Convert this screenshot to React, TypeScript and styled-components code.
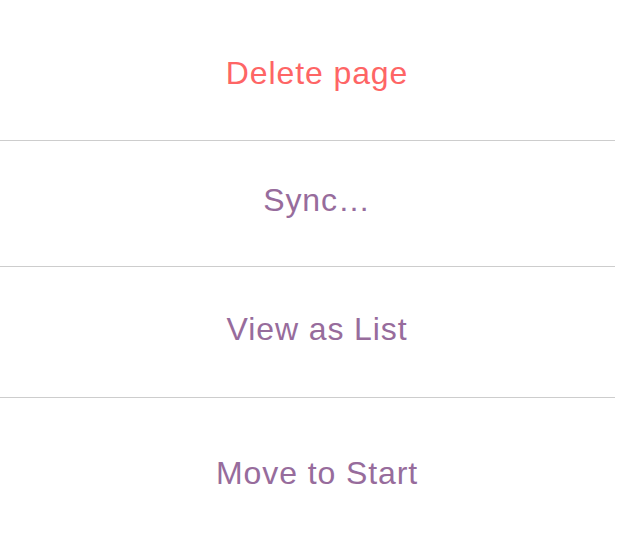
import React from "react";
import styled, { createGlobalStyle } from "styled-components";

const GlobalStyle = createGlobalStyle`
  html, body {
    margin: 0;
    padding: 0;
    background: #ffffff;
  }
  body {
    font-family: "Liberation Sans", Arial, sans-serif;
    -webkit-font-smoothing: antialiased;
  }
`;

const Sheet = styled.div`
  width: 615px;
  height: 537px;
  display: flex;
  flex-direction: column;
  background: #ffffff;
  overflow: hidden;
`;

const Action = styled.div<{ $height: number; $padTop: number; $last?: boolean }>`
  box-sizing: content-box;
  height: ${(p) => p.$height - p.$padTop}px;
  padding-top: ${(p) => p.$padTop}px;
  padding-left: 19px;
  border-bottom: ${(p) => (p.$last ? "none" : "1px solid #cdcdcd")};
  display: flex;
  justify-content: center;
  align-items: flex-start;
  flex-shrink: 0;
`;

const Label = styled.span<{ $danger?: boolean }>`
  font-size: 32px;
  line-height: 31px;
  letter-spacing: 0.9px;
  color: ${(p) => (p.$danger ? "#fe6565" : "#976c9c")};
`;

const actions = [
  { label: "Delete page", danger: true, height: 140, padTop: 58 },
  { label: "Sync…", height: 125, padTop: 44 },
  { label: "View as List", height: 130, padTop: 47 },
  { label: "Move to Start", height: 139, padTop: 60 },
];

export default function App() {
  return (
    <>
      <GlobalStyle />
      <Sheet>
        {actions.map((a, i) => (
          <Action
            key={a.label}
            $height={a.height}
            $padTop={a.padTop}
            $last={i === actions.length - 1}
          >
            <Label $danger={a.danger}>{a.label}</Label>
          </Action>
        ))}
      </Sheet>
    </>
  );
}
